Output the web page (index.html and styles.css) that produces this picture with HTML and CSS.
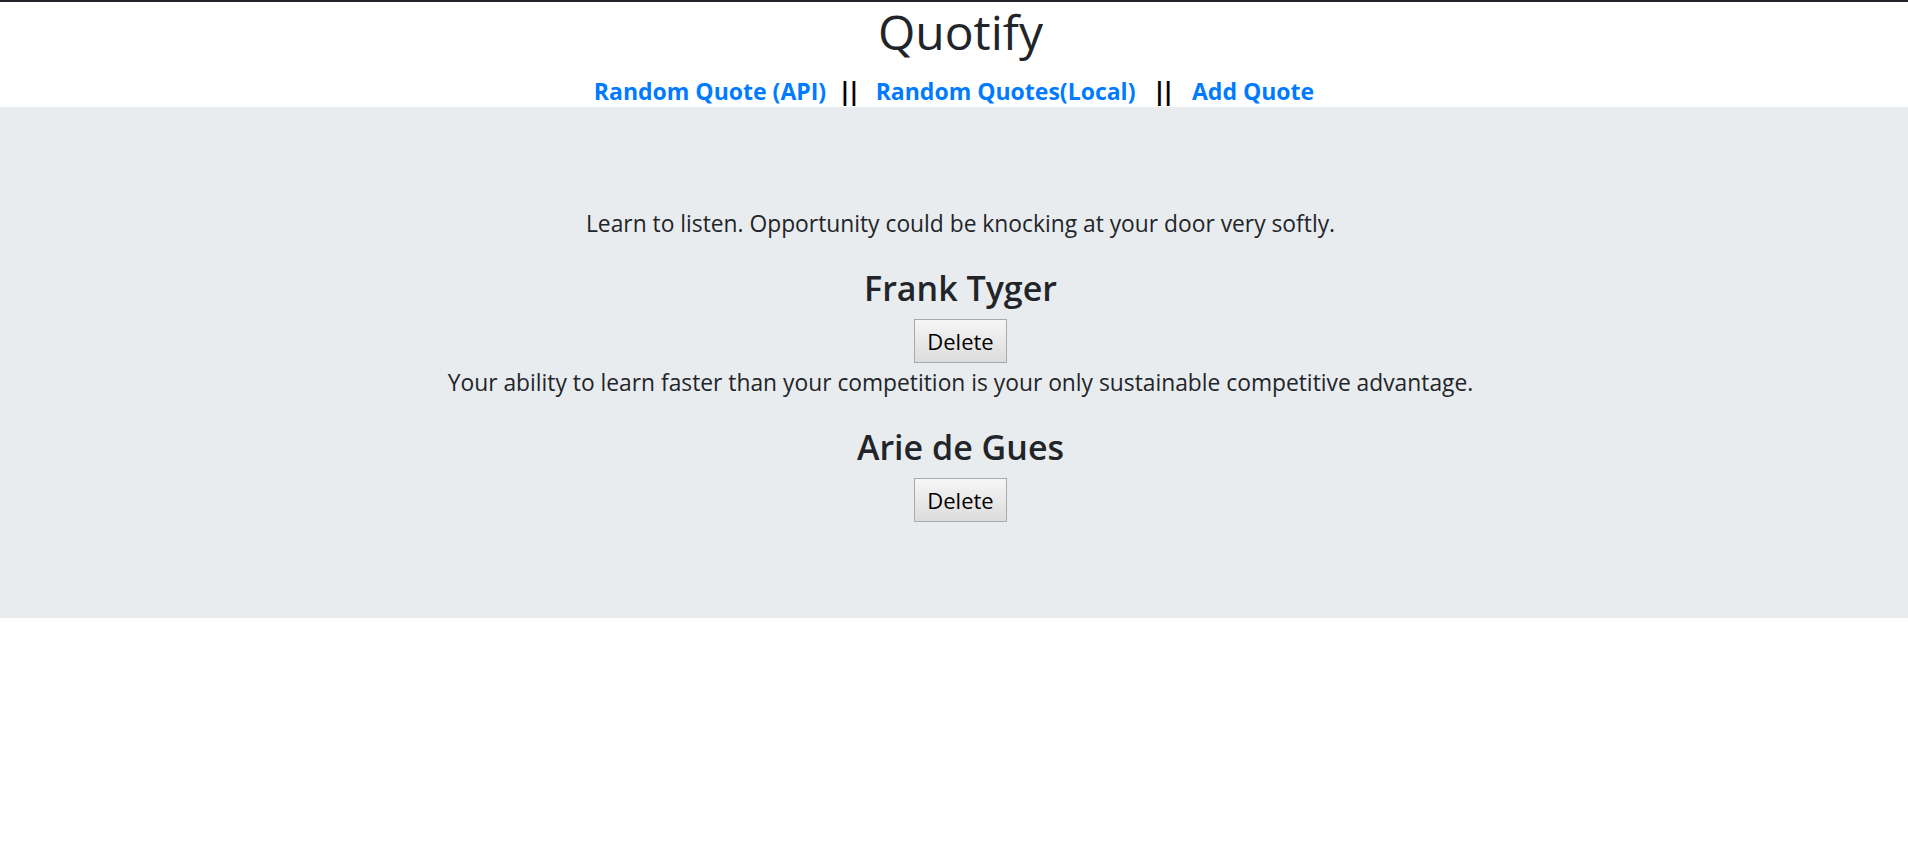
FILE: index.html
```html
<!DOCTYPE html>
<html lang="en">
<head>
<meta charset="utf-8">
<title>Quotify</title>
<link rel="stylesheet" href="styles.css">
</head>
<body>
<header class="site-header">
  <h1 class="brand">Quotify</h1>
  <nav class="main-nav">
    <a href="#" class="nav-link">Random Quote (API)</a>
    <span class="sep sep-first">||</span>
    <a href="#" class="nav-link">Random Quotes(Local)</a>
    <span class="sep sep-second">||</span>
    <a href="#" class="nav-link">Add Quote</a>
  </nav>
</header>
<main class="jumbotron">
  <div class="quote">
    <p class="quote-text">Learn to listen. Opportunity could be knocking at your door very softly.</p>
    <h3 class="quote-author">Frank Tyger</h3>
    <button class="btn-delete" type="button">Delete</button>
  </div>
  <div class="quote">
    <p class="quote-text">Your ability to learn faster than your competition is your only sustainable competitive advantage.</p>
    <h3 class="quote-author">Arie de Gues</h3>
    <button class="btn-delete" type="button">Delete</button>
  </div>
</main>
</body>
</html>
```
FILE: styles.css
```css
html, body {
  margin: 0;
  padding: 0;
}
body {
  font-family: "Open Sans", "Noto Sans", sans-serif;
  font-size: 20px;
  line-height: 1.5;
  color: #212529;
  background: #fff;
  border-top: 2px solid #212529;
}
.site-header {
  text-align: center;
}
.brand {
  margin: 0 0 10px;
  padding-left: 13px;
  font-size: 48px;
  font-weight: 500;
  line-height: 60px;
}
.main-nav {
  display: flex;
  justify-content: center;
  align-items: center;
  box-sizing: border-box;
  height: 35px;
  padding-top: 3px;
  font-size: 23px;
  font-weight: 700;
}
.nav-link {
  color: #007bff;
  text-decoration: none;
}
.sep {
  color: #000;
  font-size: 25px;
  letter-spacing: -5px;
}
.sep-first {
  margin: 0 20px 0 12px;
}
.sep-second {
  margin: 0 22px 0 17px;
}
.jumbotron {
  background: #e9ecef;
  padding: 97px 32px 96px 45px;
  text-align: center;
}
.quote {
  display: flex;
  flex-direction: column;
  align-items: center;
}
.quote-text {
  margin: 0 0 24px;
  font-size: 22.8px;
  line-height: 39px;
}
.quote-author {
  margin: 0 0 10px;
  font-size: 34px;
  font-weight: 600;
  line-height: 42px;
}
.btn-delete {
  display: inline-block;
  height: 44px;
  padding: 0 12px;
  font-family: inherit;
  font-size: 22px;
  color: #000;
  background: linear-gradient(#f6f6f6, #dcdcdc);
  border: 1px solid #a9a9a9;
  border-radius: 0;
  vertical-align: top;
}
```
